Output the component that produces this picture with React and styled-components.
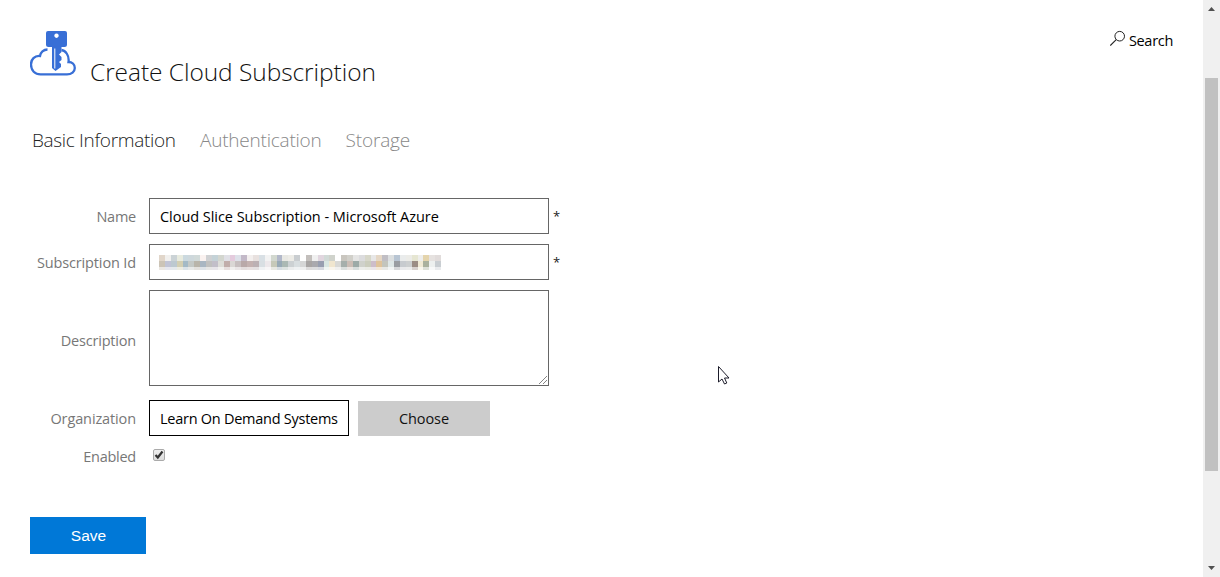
import React from "react";
import styled, { createGlobalStyle } from "styled-components";

const Global = createGlobalStyle`
  * { box-sizing: border-box; }
  html, body { margin: 0; height: 100%; overflow: hidden; background: #fff; }
  body, input, textarea, button { font-family: "Open Sans", "Noto Sans", sans-serif; }
`;
const Page = styled.div`
  position: relative;
  display: flex;
  width: 1220px;
  height: 577px;
  background: #fff;
`;
const Content = styled.main`
  flex: 1;
  display: flex;
  flex-direction: column;
  align-items: flex-start;
  padding: 30px 30px 0;
`;
const Header = styled.header`
  display: flex;
  width: 100%;
  height: 62px;
`;
const Title = styled.h1`
  margin: 24px 0 0 14px;
  font-size: 24.5px;
  font-weight: 300;
  line-height: 36px;
  letter-spacing: -0.06px;
  white-space: nowrap;
  color: #111;
`;
const Search = styled.a`
  display: flex;
  margin-left: auto;
  height: 22px;
  gap: 3px;
  font-size: 14.5px;
  line-height: 22px;
  letter-spacing: -0.3px;
  color: #000;
  svg { flex: none; }
`;
const Tabs = styled.nav`
  display: flex;
  height: 30px;
  margin: 33px 0 0 2px;
  font-size: 19px;
  font-weight: 300;
  line-height: 30px;
`;
const Tab = styled.span`
  width: ${(p) => p.$w}px;
  white-space: nowrap;
  letter-spacing: ${(p) => p.$track}px;
  color: ${(p) => (p.$active ? "#222" : "#888")};
`;
const Form = styled.form`
  display: flex;
  flex-direction: column;
  gap: 10px;
  margin-top: 43px;
`;
const Row = styled.div`
  display: flex;
  align-items: center;
  height: ${(p) => p.$h}px;
  margin-top: ${(p) => p.$shift || 0}px;
`;
const Label = styled.label`
  width: 106px;
  margin-right: 13px;
  padding-top: ${(p) => p.$drop ?? 2}px;
  text-align: right;
  font-size: 14.5px;
  line-height: 20px;
  letter-spacing: ${(p) => p.$track}px;
  white-space: nowrap;
  color: #777;
`;
const Field = styled.div`
  display: flex;
  align-items: center;
  width: ${(p) => p.$w || 400}px;
  height: 36px;
  padding: 0 ${(p) => p.$pad ?? 10}px;
  border: 1px solid ${(p) => (p.$dark ? "#000" : "#666")};
  font-size: 14.5px;
  letter-spacing: ${(p) => p.$track}px;
  white-space: nowrap;
  color: #000;
`;
const Area = styled.textarea`
  width: 400px;
  height: 96px;
  border: 1px solid #666;
  outline: none;
  resize: none;
`;
const AreaWrap = styled.div`
  position: relative;
  height: 96px;
  svg { position: absolute; right: 1px; bottom: 1px; }
`;
const Required = styled.span`
  margin-left: 4px;
  font-size: 13px;
  color: #222;
`;
const Choose = styled.button`
  width: 132px;
  height: 35px;
  margin: 1px 0 0 9px;
  padding: 0;
  border: 0;
  background: #ccc;
  font-size: 14.5px;
  letter-spacing: -0.1px;
  color: #111;
`;
const Check = styled.span`
  display: flex;
  width: 12px;
  height: 12px;
  margin: -3px 0 0 4px;
  border: 1px solid #aaa;
  border-radius: 2px;
  background: linear-gradient(#eee, #ddd);
`;
const Save = styled.button`
  width: 116px;
  height: 37px;
  margin-top: 50px;
  padding: 0 0 0 1px;
  border: 0;
  background: #0078d7;
  font-family: "Liberation Sans", Arial, sans-serif;
  font-size: 15.5px;
  color: #fff;
`;
const Scrollbar = styled.aside`
  display: flex;
  flex-direction: column;
  align-items: center;
  width: 17px;
  height: 577px;
  background: #f0f0f0;
`;
const Thumb = styled.div`
  width: 13px;
  height: 393px;
  margin: 61px 0 89px;
  background: #c1c1c1;
`;
const Pointer = styled.svg`
  position: absolute;
  left: 717px;
  top: 365px;
`;
const Mosaic = styled.div`
  display: grid;
  grid-template: 6px 6px 3px / repeat(48, 5.875px);
`;
const Cell = styled.i`
  background: ${(p) => p.$c};
  opacity: ${(p) => (p.$faded ? 0.4 : 1)};
`;

const UPPER =
  "e1d6ca f1f0ee cbd3d6 e8ebdf cbd9df ced8dc d1dad9 faf2f0 cfd1d3 c4d2d7 d3d6cf e0e0e6 e4cbdd dde1e9 c3b9c8 f3efee e8e1df d9e0e5 f3f3f3 d2d8cf b2b8c9 e8e8e3 edece7 c9cdd0 ffffff c3bfbc f0f0f0 e1d6df d1dad7 d0d3cc ffffff c9c6bf d1d0ca e5e5e4 dcdcde d7d7c9 e7e7e7 e5d7c5 c0bec4 dcdfe0 b8c5d3 eaecec ecece8 e6e6d2 eeeeec e4d4ac e6e2e0 e1dcdb".split(" ");
const LOWER =
  "ccc4b6 c1c4d5 bdc9d0 d3cfb3 a4bac6 c4c9c6 b9b5aa a9b6c2 c0c0bf c2bfc9 ddddd8 c1adaa dad7d5 c7bfc0 b9a9a9 c4b2b1 bcb1b4 d9dfe3 ede8eb c6c9b9 98aab6 abb9b4 ccd1d3 d8dee0 d6d6d6 a9a5a4 aaa9ae 989eb0 d9e6e2 f0e6cf d9d9d6 a6afab cbbdb5 9caaa7 cfd1cb cbcdbd cdbdca dfc39b c3c5bd dee7e7 999da2 c7cbcf cccfd0 9b8d85 f0ead5 aab19e edf0ef c9ced2".split(" ");

const CloudKey = () => (
  <svg width="46" height="47" viewBox="0.5 -0.5 46 47">
    <path d="M18 19C14 19 11 22 10.5 25.5C5 25 1.5 29 1.5 34C1.5 40 5.5 43.9 11 43.9H37.5C42 43.9 45.3 41 45.3 37.500C45.3 34 42.5 31.500 39 31.500C40 25 36 20 32 19.500" fill="none" stroke="#386fd6" strokeWidth="2.3" />
    <path fill="#386fd6" fillRule="evenodd" d="M18.500 0.500H35.500Q37.500 .5 37.500 2.500V14Q37.500 16.500 35 16.500H19Q16.500 16.500 16.500 14V2.500Q16.500 .5 18.500 .5ZM27 3A2.200 2.200 0 1 0 27.001 3Z" />
    <path d="M22.500 16V37.500L26 40.500L31.500 36.500V33.500L29.500 31.500L32 29.500V26.500L29.500 24L32 21.500V16Z" fill="#386fd6" />
    <path d="M25.300 18V38" stroke="#fff" strokeWidth="1" />
  </svg>
);
const Arrow = ({ down }) => (
  <svg width="7" height="17" viewBox="0 0 7 17">
    <path fill="#505050" d={down ? "M0 6H7L3.5 10Z" : "M0 11H7L3.5 7Z"} />
  </svg>
);

export default function App() {
  return (
    <Page>
      <Global />
      <Content>
        <Header>
          <CloudKey />
          <Title>Create Cloud Subscription</Title>
          <Search>
            <svg width="16" height="17" viewBox="0 0 16 17" fill="none" stroke="#222">
              <circle cx="9.7" cy="6.2" r="4.8" />
              <path d="M6.2 9.700L.3 15.600" strokeWidth="1.1" />
            </svg>
            <span>Search</span>
          </Search>
        </Header>
        <Tabs>
          <Tab $active $w={168} $track={-0.33}>Basic Information</Tab>
          <Tab $w={145.5} $track={-0.22}>Authentication</Tab>
          <Tab $w={80} $track={-0.15}>Storage</Tab>
        </Tabs>
        <Form>
          <Row $h={36}>
            <Label $track={-0.25}>Name</Label>
            <Field $track={-0.04}>Cloud Slice Subscription - Microsoft Azure</Field>
            <Required>*</Required>
          </Row>
          <Row $h={36}>
            <Label $track={-0.14}>Subscription Id</Label>
            <Field $pad={9}>
              <Mosaic>
                {[UPPER, LOWER, LOWER].flatMap((row, y) =>
                  row.map((c, x) => <Cell key={`${y}-${x}`} $c={`#${c}`} $faded={y === 2} />)
                )}
              </Mosaic>
            </Field>
            <Required>*</Required>
          </Row>
          <Row $h={96}>
            <Label $drop={6} $track={-0.2}>Description</Label>
            <AreaWrap>
              <Area />
              <svg width="10" height="10" viewBox="0 0 10 10" stroke="#666" strokeWidth=".8">
                <path d="M1 9L9 1M5 9L9 5" />
              </svg>
            </AreaWrap>
          </Row>
          <Row $h={36} $shift={4}>
            <Label $track={-0.12}>Organization</Label>
            <Field $dark $w={200} $track={-0.26}>Learn On Demand Systems</Field>
            <Choose type="button">Choose</Choose>
          </Row>
          <Row $h={21}>
            <Label $drop={0} $track={-0.25}>Enabled</Label>
            <Check>
              <svg width="10" height="10" viewBox="0 0 10 10" fill="none" stroke="#333" strokeWidth="2.2">
                <path d="M1.5 5L3.800 7.500L8.500 1.500" />
              </svg>
            </Check>
          </Row>
        </Form>
        <Save>Save</Save>
      </Content>
      <Scrollbar>
        <Arrow />
        <Thumb />
        <Arrow down />
      </Scrollbar>
      <Pointer width="13" height="20" viewBox="0 0 13 20">
        <path d="M1.500 1.500V17L5 14L7.500 19L9.800 18L7.500 13H12Z" fill="#fff" stroke="#1d1d2b" />
      </Pointer>
    </Page>
  );
}
